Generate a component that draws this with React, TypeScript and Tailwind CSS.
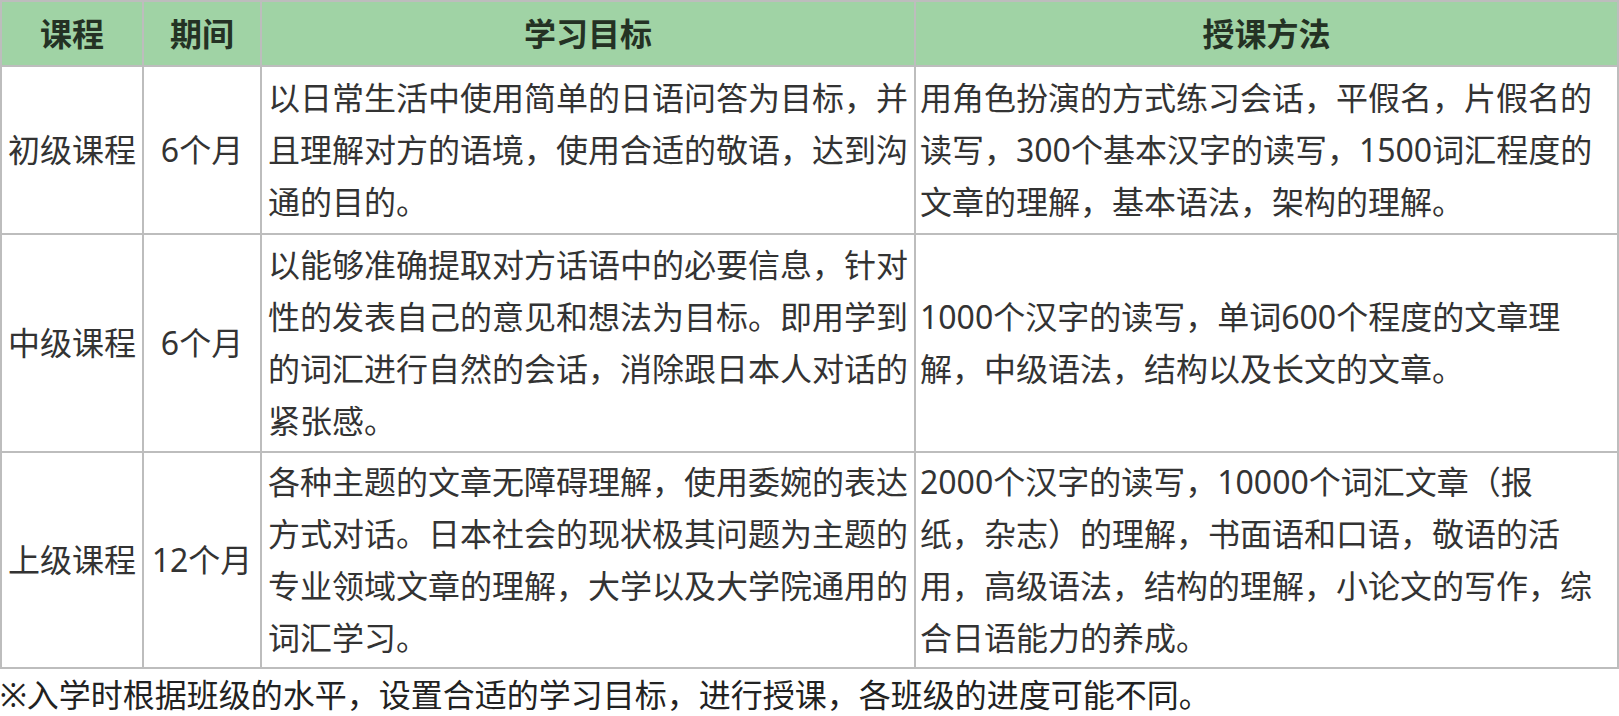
/**
 * Japanese course overview table: green header row, three course rows,
 * footnote line under the table.
 */

interface CourseRow {
  name: string
  period: string
  goal: string[]
  method: string[]
}

const FONT = "font-['Noto_Sans','Noto_Sans_CJK_SC',sans-serif]"

const COURSES: CourseRow[] = [
  {
    name: '初级课程',
    period: '6个月',
    goal: [
      '以日常生活中使用简单的日语问答为目标，并',
      '且理解对方的语境，使用合适的敬语，达到沟',
      '通的目的。'
    ],
    method: [
      '用角色扮演的方式练习会话，平假名，片假名的',
      '读写，300个基本汉字的读写，1500词汇程度的',
      '文章的理解，基本语法，架构的理解。'
    ]
  },
  {
    name: '中级课程',
    period: '6个月',
    goal: [
      '以能够准确提取对方话语中的必要信息，针对',
      '性的发表自己的意见和想法为目标。即用学到',
      '的词汇进行自然的会话，消除跟日本人对话的',
      '紧张感。'
    ],
    method: [
      '1000个汉字的读写，单词600个程度的文章理',
      '解，中级语法，结构以及长文的文章。'
    ]
  },
  {
    name: '上级课程',
    period: '12个月',
    goal: [
      '各种主题的文章无障碍理解，使用委婉的表达',
      '方式对话。日本社会的现状极其问题为主题的',
      '专业领域文章的理解，大学以及大学院通用的',
      '词汇学习。'
    ],
    method: [
      '2000个汉字的读写，10000个词汇文章（报',
      '纸，杂志）的理解，书面语和口语，敬语的活',
      '用，高级语法，结构的理解，小论文的写作，综',
      '合日语能力的养成。'
    ]
  }
]

function Lines({ lines }: { lines: string[] }): JSX.Element {
  return (
    <div>
      {lines.map((l) => (
        <span key={l} className="block whitespace-nowrap">
          {l}
        </span>
      ))}
    </div>
  )
}

const CELL = 'flex items-center border-r-2 border-b-2 border-[#bdbdbd]'
const HEAD = `${CELL} justify-center bg-[#a0d3a5] font-bold text-[#243224]`

export default function App(): JSX.Element {
  return (
    <div className={`${FONT} w-[1619px] h-[716px] bg-white text-[32px] leading-[52px] text-[#333333]`}>
      <div className="grid grid-cols-[142px_118px_654px_703px] grid-rows-[65px_168px_218px_216px] border-t-2 border-l-2 border-[#bdbdbd] w-[1619px]">
        <div className={HEAD}>课程</div>
        <div className={HEAD}>期间</div>
        <div className={HEAD}>学习目标</div>
        <div className={HEAD}>授课方法</div>

        {COURSES.map((c) => (
          <div key={c.name} className="contents">
            <div className={`${CELL} justify-center`}>{c.name}</div>
            <div className={`${CELL} justify-center`}>{c.period}</div>
            <div className={`${CELL} pl-[6px]`}>
              <Lines lines={c.goal} />
            </div>
            <div className={`${CELL} pl-[4px]`}>
              <Lines lines={c.method} />
            </div>
          </div>
        ))}
      </div>

      <p className="whitespace-nowrap text-[#222222]">
        ※入学时根据班级的水平，设置合适的学习目标，进行授课，各班级的进度可能不同。
      </p>
    </div>
  )
}
